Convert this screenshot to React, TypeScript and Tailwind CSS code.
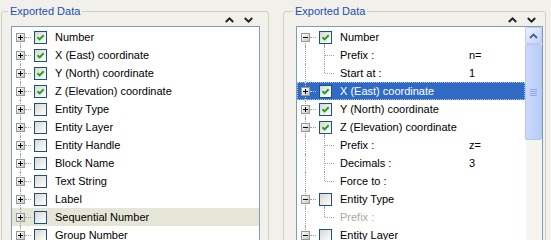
import React from 'react';

type TreeNode = {
  label: string;
  level: 0 | 1;
  expander?: 'plus' | 'minus';
  checked?: boolean;
  value?: string;
  disabled?: boolean;
  lastChild?: boolean;
  selected?: boolean;
  hover?: boolean;
};

const leftNodes: TreeNode[] = [
  { label: 'Number', level: 0, expander: 'plus', checked: true },
  { label: 'X (East) coordinate', level: 0, expander: 'plus', checked: true },
  { label: 'Y (North) coordinate', level: 0, expander: 'plus', checked: true },
  { label: 'Z (Elevation) coordinate', level: 0, expander: 'plus', checked: true },
  { label: 'Entity Type', level: 0, expander: 'plus' },
  { label: 'Entity Layer', level: 0, expander: 'plus' },
  { label: 'Entity Handle', level: 0, expander: 'plus' },
  { label: 'Block Name', level: 0, expander: 'plus' },
  { label: 'Text String', level: 0, expander: 'plus' },
  { label: 'Label', level: 0, expander: 'plus' },
  { label: 'Sequential Number', level: 0, expander: 'plus', hover: true },
  { label: 'Group Number', level: 0, expander: 'plus' },
];

const rightNodes: TreeNode[] = [
  { label: 'Number', level: 0, expander: 'minus', checked: true },
  { label: 'Prefix :', level: 1, value: 'n=' },
  { label: 'Start at :', level: 1, value: '1', lastChild: true },
  { label: 'X (East) coordinate', level: 0, expander: 'plus', checked: true, selected: true },
  { label: 'Y (North) coordinate', level: 0, expander: 'plus', checked: true },
  { label: 'Z (Elevation) coordinate', level: 0, expander: 'minus', checked: true },
  { label: 'Prefix :', level: 1, value: 'z=' },
  { label: 'Decimals :', level: 1, value: '3' },
  { label: 'Force to :', level: 1, lastChild: true },
  { label: 'Entity Type', level: 0, expander: 'minus' },
  { label: 'Prefix :', level: 1, disabled: true, lastChild: true },
  { label: 'Entity Layer', level: 0, expander: 'minus' },
];

const ExpanderBox = ({ kind }: { kind: 'plus' | 'minus' }) => (
  <span className="relative z-10 flex h-[9px] w-[9px] shrink-0 items-center justify-center border border-[#919b9c] bg-gradient-to-br from-white to-[#c8c8c0]">
    <svg width="7" height="7" viewBox="0 0 7 7">
      <rect x="1" y="3" width="5" height="1" fill="#000" />
      {kind === 'plus' && <rect x="3" y="1" width="1" height="5" fill="#000" />}
    </svg>
  </span>
);

const CheckBox = ({ checked }: { checked?: boolean }) => (
  <span className="flex h-[13px] w-[13px] shrink-0 items-center justify-center border border-[#1c5180] bg-gradient-to-br from-[#d8d8d2] to-white">
    {checked && (
      <svg width="11" height="11" viewBox="0 0 11 11">
        <path d="M2.5 5.2 L4.6 7.4 L8.7 3.2" fill="none" stroke="#21a121" strokeWidth="2" />
      </svg>
    )}
  </span>
);

const TreeRow = ({ node, first }: { node: TreeNode; first?: boolean }) => {
  const sel = node.selected;
  const dots = sel ? 'border-[#c8d8f4]' : 'border-[#a0a0a0]';
  const rowBg = sel
    ? 'bg-[#316ac5] text-white outline outline-1 outline-dotted -outline-offset-1 outline-[#a9c1ea]'
    : node.hover
      ? 'bg-[#e6e6d8] text-black'
      : 'text-black';

  if (node.level === 1) {
    return (
      <div className={`relative flex h-[18px] items-center pl-[43px] ${rowBg}`}>
        <span className={`absolute left-[8px] top-0 bottom-0 border-l border-dotted ${dots}`} />
        <span
          className={`absolute left-[27px] top-0 border-l border-dotted ${dots} ${node.lastChild ? 'h-[9px]' : 'bottom-0'}`}
        />
        <span className={`absolute left-[28px] top-[9px] w-[9px] border-t border-dotted ${dots}`} />
        <span className={`w-[129px] ${node.disabled ? 'text-[#aca899]' : ''}`}>{node.label}</span>
        <span>{node.value}</span>
      </div>
    );
  }

  return (
    <div className={`relative flex h-[18px] items-center pl-[4px] ${rowBg}`}>
      <span className={`absolute left-[8px] bottom-0 border-l border-dotted ${dots} ${first ? 'top-[9px]' : 'top-0'}`} />
      {node.expander === 'minus' && (
        <span className={`absolute left-[27px] top-[16px] bottom-0 border-l border-dotted ${dots}`} />
      )}
      {node.expander && <ExpanderBox kind={node.expander} />}
      <span className={`w-[6px] border-t border-dotted ${dots}`} />
      <span className="ml-[3px]">
        <CheckBox checked={node.checked} />
      </span>
      <span className="ml-[8px] whitespace-nowrap">{node.label}</span>
    </div>
  );
};

const Chevrons = () => (
  <div className="flex items-center gap-[10px]">
    <svg width="9" height="6" viewBox="0 0 9 6">
      <path d="M0.8 5 L4.5 1.4 L8.2 5" fill="none" stroke="#222" strokeWidth="2" />
    </svg>
    <svg width="9" height="6" viewBox="0 0 9 6">
      <path d="M0.8 1 L4.5 4.6 L8.2 1" fill="none" stroke="#222" strokeWidth="2" />
    </svg>
  </div>
);

const ScrollBar = () => (
  <div className="flex w-[17px] shrink-0 flex-col bg-[#f5f4ef]">
    <div className="flex h-[17px] items-center justify-center rounded-[2px] border border-[#bccbf0] bg-gradient-to-br from-[#eef2fe] to-[#bed0fa]">
      <svg width="9" height="6" viewBox="0 0 9 6">
        <path d="M1 5 L4.5 1.5 L8 5" fill="none" stroke="#4d6185" strokeWidth="1.8" />
      </svg>
    </div>
    <div className="flex h-[96px] flex-col items-center justify-center gap-[1px] rounded-[2px] border border-[#b2c4ef] bg-gradient-to-r from-[#cad8fc] to-[#b9cdf9]">
      <span className="h-[1px] w-[7px] bg-[#8ea9e6]" />
      <span className="h-[1px] w-[7px] bg-[#8ea9e6]" />
      <span className="h-[1px] w-[7px] bg-[#8ea9e6]" />
      <span className="h-[1px] w-[7px] bg-[#8ea9e6]" />
    </div>
    <div className="flex-1 border-l border-[#ffffff]" />
  </div>
);

const GroupBox = ({
  widthClass,
  labelLeft,
  listMargin,
  listWidth,
  children,
}: {
  widthClass: string;
  labelLeft: string;
  listMargin: string;
  listWidth: string;
  children: React.ReactNode;
}) => (
  <div className={`relative mt-[11px] h-[260px] shrink-0 rounded-[3px] border border-[#d0d0bf] ${widthClass}`}>
    <span className={`absolute -top-[7px] bg-[#f1f0ea] px-[2px] leading-[13px] text-[#1c50b0] ${labelLeft}`}>
      Exported Data
    </span>
    <div className={`flex flex-col ${listMargin} ${listWidth}`}>
      <div className="flex h-[14px] items-center justify-end pt-[2px] pr-[7px]">
        <Chevrons />
      </div>
      {children}
    </div>
  </div>
);

export default function App() {
  return (
    <div
      className="flex h-[240px] w-[551px] overflow-hidden bg-[#f1f0ea] text-[11px] leading-[13px]"
      style={{ fontFamily: '"Liberation Sans", Arial, sans-serif' }}
    >
      <div className="ml-[1px]">
        <GroupBox widthClass="w-[268px]" labelLeft="left-[6px]" listMargin="ml-[9px]" listWidth="w-[249px]">
          <div className="h-[230px] border border-[#7f9db9] bg-white pt-[1px]">
            {leftNodes.map((n, i) => (
              <TreeRow key={i} node={n} first={i === 0} />
            ))}
          </div>
        </GroupBox>
      </div>
      <div className="ml-[14px]">
        <GroupBox widthClass="w-[263px]" labelLeft="left-[9px]" listMargin="ml-[12px]" listWidth="w-[247px]">
          <div className="flex h-[230px] border border-[#7f9db9] bg-white">
            <div className="flex-1 pt-[1px]">
              {rightNodes.map((n, i) => (
                <TreeRow key={i} node={n} first={i === 0} />
              ))}
            </div>
            <ScrollBar />
          </div>
        </GroupBox>
      </div>
    </div>
  );
}
